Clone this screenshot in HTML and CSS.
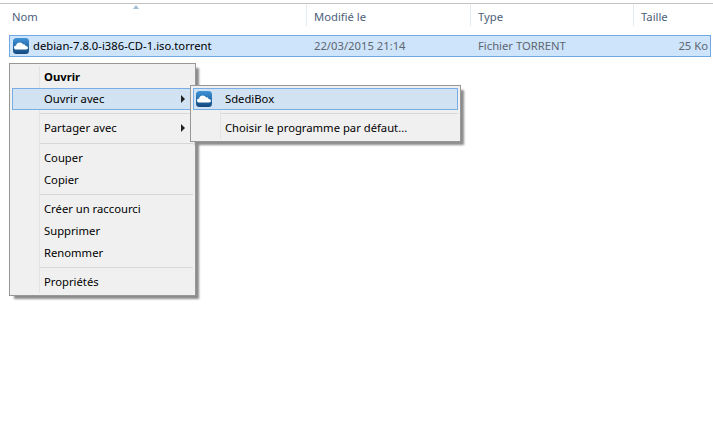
FILE: index.html
```html
<!DOCTYPE html>
<html lang="fr">
<head>
<meta charset="utf-8">
<title>Explorateur</title>
<link rel="stylesheet" href="styles.css">
</head>
<body>
<svg class="defs" width="0" height="0" aria-hidden="true">
  <defs>
    <linearGradient id="tile" x1="0" y1="0" x2="0" y2="1">
      <stop offset="0" stop-color="#3f94d8"/>
      <stop offset="1" stop-color="#14497f"/>
    </linearGradient>
    <symbol id="app" viewBox="0 0 16 16">
      <rect x="0" y="0" width="16" height="16" rx="3.5" fill="url(#tile)"/>
      <path d="M3.4 11.5C1.9 11.5 1 10.5 1 9.4 1 8.2 2 7.4 3.1 7.4 3.4 5.7 4.9 4.4 6.7 4.4 8.2 4.4 9.5 5.2 10.1 6.5 10.5 6.3 11 6.3 11.4 6.5 12.1 6.7 12.5 7.3 12.6 7.9 14 7.9 15 8.7 15 9.8 15 10.8 14.1 11.5 13 11.5Z" fill="#fff"/>
    </symbol>
  </defs>
</svg>
<div class="topline"></div>
<div class="header">
  <div class="col col-name">Nom<span class="sort"></span></div>
  <div class="col col-date">Modifié le</div>
  <div class="col col-type">Type</div>
  <div class="col col-size">Taille</div>
</div>
<div class="file-row">
  <div class="cell-name"><svg class="icon"><use href="#app"/></svg><span>debian-7.8.0-i386-CD-1.iso.torrent</span></div>
  <div class="cell-date">22/03/2015 21:14</div>
  <div class="cell-type">Fichier TORRENT</div>
  <div class="cell-size">25 Ko</div>
</div>

<div class="menu menu-main">
  <div class="item bold"><span class="label">Ouvrir</span></div>
  <div class="item active"><span class="label">Ouvrir avec</span><span class="arrow"></span></div>
  <div class="sep"></div>
  <div class="item"><span class="label">Partager avec</span><span class="arrow"></span></div>
  <div class="sep wide"></div>
  <div class="item"><span class="label">Couper</span></div>
  <div class="item"><span class="label">Copier</span></div>
  <div class="sep"></div>
  <div class="item"><span class="label">Créer un raccourci</span></div>
  <div class="item"><span class="label">Supprimer</span></div>
  <div class="item"><span class="label">Renommer</span></div>
  <div class="sep"></div>
  <div class="item"><span class="label">Propriétés</span></div>
</div>

<div class="menu menu-sub">
  <div class="item active"><svg class="icon item-icon"><use href="#app"/></svg><span class="label">SdediBox</span></div>
  <div class="sep"></div>
  <div class="item"><span class="label">Choisir le programme par défaut...</span></div>
</div>
</body>
</html>
```
FILE: styles.css
```css
* { box-sizing: border-box; }
html, body { margin: 0; height: 100%; background: #fff; overflow: hidden; }
body { font: 11.25px/16px "Noto Sans", "Open Sans", sans-serif; color: #000; position: relative; }
.defs { position: absolute; }
.topline { height: 4px; border-bottom: 1px solid #c4c4c4; border-top: 3px solid #fff; }
.header { display: flex; height: 26px; color: #4c607a; }
.col { padding: 5px 0 0 7px; border-right: 1px solid #e3ebf3; position: relative; height: 22px; }
.col-name { width: 307px; padding-left: 12px; }
.col-date { width: 164px; }
.col-type { width: 163px; }
.col-size { flex: 1; border-right: 0; }
.sort { position: absolute; left: 133px; top: 1px; border: 3px solid transparent; border-top: 0; border-bottom: 4px solid #a3bdd6; }
.file-row { display: flex; align-items: center; height: 22px; margin: 5px 2px 0 9px; background: #cde4fb; border: 1px solid #72a9e3; }
.file-row .icon { width: 16px; height: 16px; margin-right: 4px; flex: none; }
.cell-name { width: 304px; padding-left: 3px; display: flex; align-items: center; color: #000; }
.cell-date { width: 164px; color: #5f6670; }
.cell-type { width: 120px; color: #5f6670; }
.cell-size { flex: 1; text-align: right; padding-right: 2px; color: #5f6670; }
.menu { position: absolute; background: #f0f0f0; border: 1px solid #979797; padding: 2px; box-shadow: 4px 4px 2px -1px #8c8c8c; }
.menu::before { content: ""; position: absolute; top: 2px; bottom: 2px; left: 29px; border-left: 1px solid #e2e3e3; }
.menu-main { left: 9px; top: 63px; width: 187px; }
.menu-sub { left: 190px; top: 85px; width: 271px; }
.item { height: 22px; display: flex; align-items: center; position: relative; border: 1px solid transparent; }
.item.active { background: #d1e2f2; border-color: #78aee5; }
.item.bold { font-weight: 700; }
.label { position: absolute; left: 31px; white-space: nowrap; }
.arrow { position: absolute; right: 7px; top: 6px; border: 4px solid transparent; border-right: 0; border-left: 4px solid #222; }
.item-icon { position: absolute; left: 2px; top: 2px; width: 16px; height: 16px; }
.sep { height: 7px; margin-left: 28px; position: relative; }
.sep.wide { height: 8px; }
.sep::after { content: ""; position: absolute; left: 0; right: 0; top: 3px; border-top: 1px solid #d7d7d7; }
.sep.wide::after { top: 4px; }
```
